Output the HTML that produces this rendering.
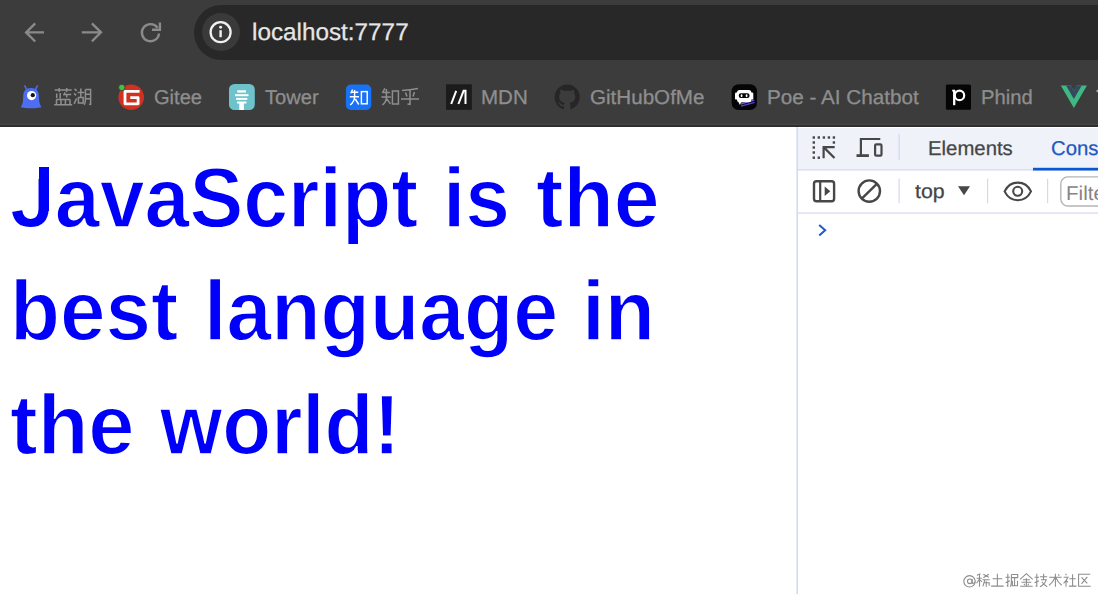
<!DOCTYPE html>
<html><head><meta charset="utf-8">
<style>
*{box-sizing:border-box}
html,body{margin:0;padding:0}
body{width:1098px;height:594px;overflow:hidden;position:relative;background:#fff;font-family:"Liberation Sans",sans-serif;text-rendering:geometricPrecision}
.abs{position:absolute}
#chrome{left:0;top:0;width:1098px;height:127px;background:#3c3c3c}
#pill{left:194px;top:5px;width:940px;height:55px;border-radius:28px;background:#282828}
#infobg{left:202px;top:13px;width:38px;height:38px;border-radius:50%;background:#3a3a3a}
#url{left:252.4px;top:21.4px;font-size:24px;line-height:24px;color:#e6e6e6;white-space:nowrap;transform:scaleX(1.012);transform-origin:0 0;-webkit-text-stroke:0.25px #e6e6e6}
.bm{position:absolute;top:88px;font-size:20px;line-height:20px;color:#8e8e8e;white-space:nowrap;-webkit-text-stroke:0.3px #8e8e8e;transform-origin:0 0}
.w{position:absolute;font-weight:bold;font-size:85px;line-height:85px;color:#0000fa;white-space:nowrap;transform-origin:0 0;-webkit-text-stroke:1.5px #fff}
#dt{left:797px;top:127px;width:301px;height:467px;background:#fff}
#dthead{left:0;top:1px;width:301px;height:42px;background:#eff2f9}
.dtx{position:absolute;font-size:20px;line-height:20px;white-space:nowrap;transform-origin:0 0}
svg.ov{position:absolute;left:0;top:0}
</style></head>
<body>
<div id="chrome" class="abs">
  <div id="pill" class="abs"></div>
  <div id="infobg" class="abs"></div>
  <div id="url" class="abs">localhost:7777</div>
  <div class="bm" style="left:154.2px;transform:scaleX(1.004)">Gitee</div>
  <div class="bm" style="left:264.5px;transform:scaleX(1.006)">Tower</div>
  <div class="bm" style="left:481.1px;transform:scaleX(1.026)">MDN</div>
  <div class="bm" style="left:590.3px;transform:scaleX(1.030)">GitHubOfMe</div>
  <div class="bm" style="left:766.6px;transform:scaleX(1.0335)">Poe - AI Chatbot</div>
  <div class="bm" style="left:980.85px;transform:scaleX(1.0097)">Phind</div>
</div>

<div id="page">
<div class="abs" style="left:24px;top:162px;width:15.2px;height:17px;background:#fff;z-index:2"></div>
<div class="abs" style="left:39.2px;top:166.8px;width:9.7px;height:44px;background:#0000fa;z-index:3"></div>
<div class="w" style="left:9.95px;top:156.0px;transform:scaleX(0.9489)">JavaScript</div>
<div class="w" style="left:443.27px;top:156.0px;transform:scaleX(0.9450)">is</div>
<div class="w" style="left:536.3px;top:156.0px;transform:scaleX(0.9687)">the</div>
<div class="w" style="left:9.55px;top:268.50px;transform:scaleX(0.9619)">best</div>
<div class="w" style="left:203.7px;top:268.5px;transform:scaleX(0.9494)">language</div>
<div class="w" style="left:582.42px;top:268.50px;transform:scaleX(0.9669)">in</div>
<div class="w" style="left:10.0px;top:383.0px;transform:scaleX(0.9769)">the</div>
<div class="w" style="left:160.3px;top:383.0px;transform:scaleX(0.9420)">world!</div>
</div>

<div id="dt" class="abs">
  <div id="dthead" class="abs"></div>
</div>
<div class="dtx" style="left:927.9px;top:139.3px;color:#454545;transform:scaleX(1.017);-webkit-text-stroke:0.25px #454545">Elements</div>
<div class="dtx" style="left:1051.1px;top:139.3px;color:#1e57c2;transform:scaleX(1.017);-webkit-text-stroke:0.25px #1e57c2">Cons</div>
<div class="dtx" style="left:915.2px;top:182px;color:#454545;transform:scaleX(1.067);-webkit-text-stroke:0.25px #454545">top</div>
<div class="dtx" style="left:1066.4px;top:183.7px;color:#848484;transform:scaleX(1.03)">Filte</div>

<svg class="ov" width="1098" height="594" viewBox="0 0 1098 594">
  <!-- chrome bottom line -->
  <rect x="0" y="123.8" width="1098" height="1.2" fill="#464646"/><rect x="0" y="125" width="1098" height="2" fill="#2e2e2e"/>
  <!-- nav icons -->
  <g fill="none" stroke="#8a8a8a" stroke-width="2.35" stroke-linecap="butt">
    <path d="M44 32.4H26M35.2 23.3L26.1 32.4 35.2 41.5"/>
    <path d="M81.8 32.3H100M91.9 23.4L101 32.3 91.9 41.4"/>
    <path d="M159.05 33.5A8.6 8.6 0 1 1 157.5 27.7" stroke-width="2.4"/>
    <path d="M159.9 22.4V29.8H152" stroke-width="2.4"/>
  </g>
  <!-- info icon -->
  <circle cx="220.6" cy="32.2" r="10" fill="none" stroke="#f0f0f0" stroke-width="2.3"/>
  <rect x="219.4" y="30.2" width="2.4" height="7" fill="#f0f0f0"/>
  <circle cx="220.6" cy="27.2" r="1.45" fill="#f0f0f0"/>

  <!-- bookmark icons -->
  <!-- lanhu -->
  <path d="M24.6 85.3L26.9 90.2M37.6 85.3L35.3 90.2" stroke="#5b62d6" stroke-width="1.7" fill="none"/>
  <path d="M31 88C36 88 38.6 91 38.8 95L39.3 102Q40 105 41.6 107.2Q36 108.6 31 108.3Q26 108.6 20.6 107.2Q22.2 105 22.9 102L23.3 95C23.6 91 26 88 31 88Z" fill="#4d6ef0"/>
  <circle cx="31.6" cy="95.6" r="4.6" fill="#ffffff"/>
  <circle cx="32.8" cy="95.2" r="2.1" fill="#151515"/>
  <!-- gitee -->
  <circle cx="131.2" cy="97.2" r="12.8" fill="#d2311f"/>
  <path d="M139.6 91.4H125V103.8H138.1V97.6H130.3" fill="none" stroke="#ffffff" stroke-width="2.8" stroke-linejoin="round"/>
  <circle cx="121.8" cy="87.5" r="3.2" fill="#46c23a" stroke="#3c3c3c" stroke-width="0.9"/>
  <!-- tower -->
  <rect x="229" y="84" width="25.8" height="26" rx="5.5" fill="#6ec2cb"/>
  <g fill="#ffffff">
    <rect x="237.3" y="90.3" width="8.6" height="2.3"/>
    <rect x="235" y="94.2" width="13.5" height="2"/>
    <rect x="236.2" y="97.9" width="11.1" height="2"/>
    <rect x="237" y="101.5" width="9.5" height="2"/>
    <rect x="239.3" y="103" width="4.6" height="7"/>
  </g>
  <!-- zhihu -->
  <rect x="345.9" y="84.6" width="25.4" height="25.4" rx="5" fill="#1772f6"/>
  <g fill="none" stroke="#ffffff" stroke-width="1.45">
    <path d="M352.6 89.5L350.8 93.2M351.3 92.3H358.3M349.8 96.8H359M354.6 90V96.8Q354.6 101.5 350.2 105M355.3 99L358.8 104.5"/>
    <rect x="361.4" y="91.6" width="5.8" height="12.2"/>
  </g>
  <!-- mdn -->
  <rect x="446" y="84.3" width="25.8" height="25.5" fill="#1b1b1b"/>
  <path d="M451.2 104L456.2 90.8M458.4 104L463.6 90.8H465.5V104" fill="none" stroke="#ffffff" stroke-width="2"/>
  <!-- github -->
  <g transform="translate(554.6 84.6) scale(1.575)">
    <path fill="#262626" d="M8 0C3.58 0 0 3.58 0 8c0 3.54 2.29 6.53 5.47 7.59.4.07.55-.17.55-.38 0-.19-.01-.82-.01-1.49-2.010.37-2.53-.49-2.69-.94-.09-.23-.48-.94-.82-1.130-.28-.15-.68-.52-.01-.53.63-.01 1.08.58 1.23.82.72 1.21 1.87.87 2.33.66.07-.52.28-.87.51-1.07-1.78-.2-3.64-.89-3.640-3.95 0-.87.31-1.59.82-2.15-.08-.2-.36-1.02.08-2.12 0 0 .67-.21 2.2.82.64-.18 1.32-.27 2-.27.68 0 1.36.09 2 .27 1.53-1.04 2.2-.82 2.2-.82.44 1.1.16 1.92.08 2.12.51.56.82 1.27.82 2.15 0 3.070-1.87 3.75-3.65 3.95.29.25.54.73.54 1.48 0 1.07-.01 1.93-.01 2.2 0 .21.15.46.55.38A8.013 8.013 0 0016 8c0-4.42-3.58-8-8-8z"/>
  </g>
  <!-- poe -->
  <rect x="731.6" y="84.3" width="25.4" height="25.7" rx="7" fill="#050505"/>
  <path d="M740.5 104.2L754.2 100.2" stroke="#8a4fd8" stroke-width="1.3" fill="none"/>
  <path d="M741 106.2L754.6 102.3" stroke="#4848e0" stroke-width="1.2" fill="none"/>
  <g fill="#ffffff">
    <rect x="737" y="90" width="14.3" height="12.3" rx="2.5"/>
    <rect x="735" y="92.6" width="3.6" height="7" rx="1.2"/>
    <rect x="749.7" y="92.6" width="3.6" height="7" rx="1.2"/>
    <path d="M738.3 101.5H742L739.6 104.8Z"/>
  </g>
  <rect x="738.8" y="93.3" width="10.7" height="4.7" rx="2" fill="#050505"/>
  <ellipse cx="741.6" cy="95.7" rx="0.95" ry="1.45" fill="#ffffff"/>
  <ellipse cx="746.6" cy="95.7" rx="0.95" ry="1.45" fill="#ffffff"/>
  <!-- phind -->
  <rect x="945.9" y="84.5" width="25.1" height="25.3" rx="1.5" fill="#050505"/>
  <path d="M954.2 90V105.2" stroke="#ffffff" stroke-width="2.3" fill="none"/>
  <circle cx="959.5" cy="95.4" r="4.7" stroke="#ffffff" stroke-width="2.2" fill="none"/>
  <path d="M952.2 90.6H955" stroke="#ffffff" stroke-width="1.8" fill="none"/>
  <!-- vue -->
  <g transform="translate(1060.8 85.4) scale(0.1)">
    <path d="M161.096.001l-30.225 52.351L100.647.001H-.005l130.877 226.688L261.749.001z" fill="#41b883"/>
    <path d="M161.096.001l-30.225 52.351L100.647.001H52.346l78.526 136.01L209.398.001z" fill="#34495e"/>
  </g>
  <circle cx="1097.6" cy="91" r="1.3" fill="#a0a0a0"/>

  <!-- CJK bookmark labels -->
  <g fill="none" stroke="#8e8e8e" stroke-width="1.5">
    <!-- 蓝 at 54.2,87.9 -->
    <g transform="translate(54.2 87.9)">
      <path d="M0.5 2H17.5M5 0V4M12.5 0V4M2.5 5.5V10M6 5V10.5M11 4.5L9.3 7.5M9.8 6.5H17M12.5 7V9.5M2 11.5H16M2.3 11.5V16.5M6.8 11.5V16.5M11.2 11.5V16.5M15.8 11.5V16.5M0 16.8H18"/>
    </g>
    <!-- 湖 at 73.6,87.9 -->
    <g transform="translate(73.6 87.9)">
      <path d="M1 1L3 3M0.5 5.5L2.5 7.5M0.5 16L3 10.5M4 4.5H10.5M7.2 0.5V9.5M4.8 9.5H9.6V15H4.8ZM11.8 1.5V12Q11.8 15 10.5 17M11.8 1.5H17V16.5L15.5 16.3M11.8 6.3H17M11.8 10.8H17"/>
    </g>
    <!-- 知 at 381.4,87.9 -->
    <g transform="translate(381.4 87.9)">
      <path d="M3.5 0.5L1 5M1.5 4.5H8.5M0 9H9.5M5 1V9Q5 14 1 17M5.5 11L9 16M11 3H17V16H11Z"/>
    </g>
    <!-- 乎 at 401,87.9 -->
    <g transform="translate(401 87.9)">
      <path d="M1 2.5Q9 2 17 0.5M4.5 4.5L6 8.5M13.5 4L12 8.5M0 11H18M9 2.5V16.5L6.5 16"/>
    </g>
  </g>

  <!-- devtools borders -->
  <rect x="796.4" y="127" width="1.6" height="467" fill="#d5daf2"/>
  <rect x="798" y="169.3" width="300" height="1.2" fill="#d5d8f3"/>
  <rect x="798" y="212.5" width="300" height="1.2" fill="#d5d8f3"/>
  <!-- separators -->
  <rect x="898.5" y="134" width="1.2" height="26" fill="#d5d8f3"/>
  <rect x="898.5" y="178.7" width="1.2" height="24.5" fill="#d5d8f3"/>
  <rect x="987" y="178.7" width="1.2" height="24.5" fill="#d5d8f3"/>
  <rect x="1047" y="178.7" width="1.2" height="24.5" fill="#d5d8f3"/>
  <!-- active tab underline -->
  <rect x="1033" y="167.8" width="65" height="2.7" fill="#0b57d0"/>

  <!-- devtools icons -->
  <g fill="#474747">
    <!-- inspect dots -->
    <rect x="812.6" y="136.3" width="2.4" height="2.4"/><rect x="817.6" y="136.3" width="2.4" height="2.4"/><rect x="822.7" y="136.3" width="2.4" height="2.4"/><rect x="827.7" y="136.3" width="2.4" height="2.4"/><rect x="832.7" y="136.3" width="2.4" height="2.4"/>
    <rect x="812.6" y="141.3" width="2.4" height="2.4"/><rect x="812.6" y="146.3" width="2.4" height="2.4"/><rect x="812.6" y="151.3" width="2.4" height="2.4"/><rect x="812.6" y="156.5" width="2.4" height="2.4"/>
    <rect x="817.6" y="156.5" width="2.4" height="2.4"/>
    <rect x="832.7" y="141.3" width="2.4" height="2.4"/>
  </g>
  <g fill="none" stroke="#474747" stroke-width="2.2">
    <path d="M834.7 147.1H823.6V158.3M823.6 147.1L834.5 158"/>
    <path d="M880.3 139H860.9V155.6"/>
    <path d="M856.5 155.6H868.9" stroke-width="2.8"/>
    <rect x="875.1" y="144.4" width="6.4" height="11.3" rx="1.2"/>
    <rect x="814" y="181.3" width="20.1" height="20" rx="2.5" stroke-width="2.4"/>
    <path d="M820.2 181.3V201.3"/>
    <circle cx="869.3" cy="191.1" r="10.7" stroke-width="2.4"/>
    <path d="M861.8 198.6L877.1 183.6" stroke-width="2.4"/>
    <path d="M1004.6 191.4C1007.6 185.2 1012.5 182.6 1017.8 182.6C1023.1 182.6 1028 185.2 1031 191.4C1028 197.6 1023.1 200.2 1017.8 200.2C1012.5 200.2 1007.6 197.6 1004.6 191.4Z" stroke-width="2.1"/>
    <circle cx="1017.7" cy="191.3" r="4.5" stroke-width="2.1"/>
  </g>
  <path d="M824.7 186.5V196L830.3 191.3Z" fill="#474747"/>
  <path d="M958 186.2H970L964 195.2Z" fill="#474747"/>
  <!-- filter box -->
  <rect x="1060.8" y="176.9" width="60" height="29.1" rx="7" fill="none" stroke="#b5b5b5" stroke-width="1.4"/>
  <!-- console prompt -->
  <path d="M819.2 225L825.2 230.3 819.2 235.6" fill="none" stroke="#1f5bc6" stroke-width="2"/>

  <!-- watermark -->
  <g fill="none" stroke="#8c8c8c" stroke-width="1.1" transform="translate(963.5 573.3)">
    <circle cx="6" cy="8" r="5.7"/><circle cx="6.3" cy="8" r="2.3"/><path d="M8.6 5.8V9.5Q9.5 11 11.7 8.5"/>
    <!-- 稀 -->
    <g transform="translate(12.6 0) scale(0.97 1)"><path d="M4.5 0.5L0.8 2M0.5 5H6M3.5 1.5V13.5M3.3 6L0.5 10M3.8 6.5L6 8.5M7.5 1L13 4M13 1L7.5 4.5M6.5 6.5H14M9 6.5L7 13M8 9.5H13.5V12.5M10.5 8V13.5"/></g>
    <!-- 土 -->
    <g transform="translate(27.1 0) scale(0.97 1)"><path d="M2 5.5H12M7 0.5V12.5M0.5 12.8H13.5"/></g>
    <!-- 掘 -->
    <g transform="translate(41.6 0) scale(0.97 1)"><path d="M0.5 4H5M2.8 0.5V13L1.5 12.5M0.5 9.5L5 7.5M6.5 1.2H13V4.3H6.5M6.5 1.2V8Q6.5 11.5 5.5 13.5M9.8 5V12.5M7.5 7.5V12.5H12.8V7.5"/></g>
    <!-- 金 -->
    <g transform="translate(56.1 0) scale(0.97 1)"><path d="M7 0.3L0.5 6M7 0.3L13.5 6M3.5 6.5H10.5M2 9H12M7 5V12.8M4.5 10.5L5.5 12M9.5 10.5L8.5 12M0.5 13H13.5"/></g>
    <!-- 技 -->
    <g transform="translate(70.6 0) scale(0.97 1)"><path d="M0.5 4H5M2.8 0.5V13L1.5 12.5M0.5 9.5L5 7.5M6 3.5H13.5M9.8 0.5V6M7 6.5H12.5Q11 11 6 13.5M8 8.5Q10.5 12 13.5 13.5"/></g>
    <!-- 术 -->
    <g transform="translate(85.1 0) scale(0.97 1)"><path d="M0.5 4H13.5M7 0.5V13.5M6.5 4.5Q4.5 9 0.5 12M7.5 4.5Q9.5 9 13.5 12M10 1L11 2.5"/></g>
    <!-- 社 -->
    <g transform="translate(99.6 0) scale(0.97 1)"><path d="M2.5 0.5L3.5 2M0.5 4H5Q3.5 7.5 0.5 10M3 6.5V13.5M3.5 7.5L5 9M6.5 5.5H13M9.8 1V12.5M6 12.8H13.8"/></g>
    <!-- 区 -->
    <g transform="translate(114.1 0) scale(0.97 1)"><path d="M13 1H1V13H13.5M4 4L10 10M10 3.5L4 10.5"/></g>
  </g>
</svg>
</body></html>
